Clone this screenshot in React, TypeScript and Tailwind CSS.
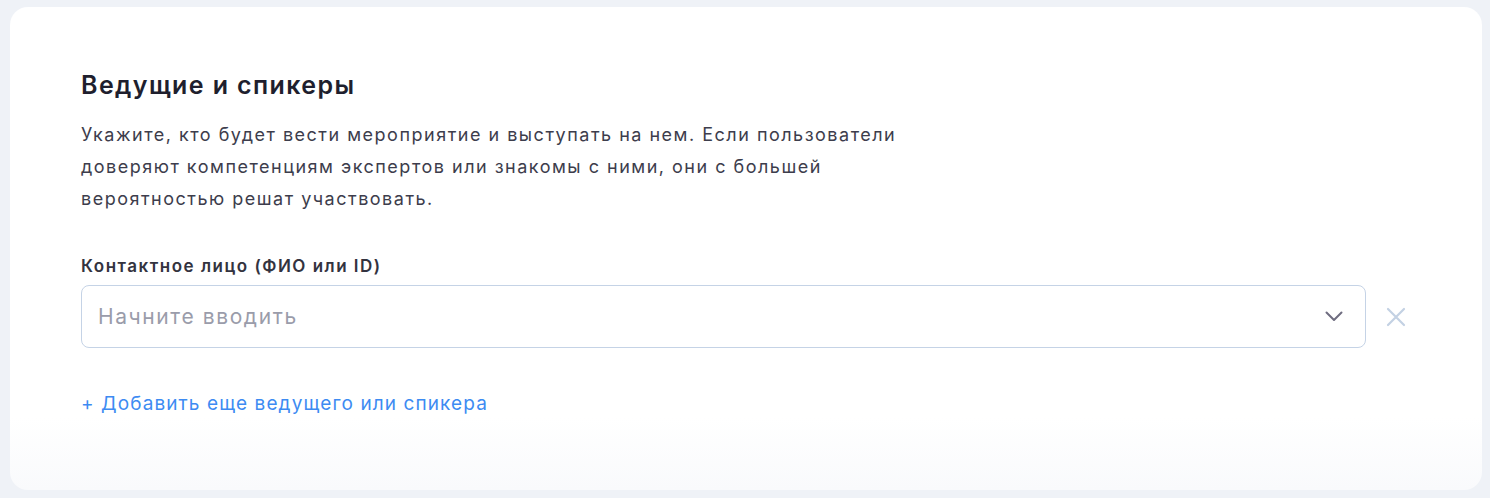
export default function App() {
  return (
    <div className="w-full min-h-[498px] bg-[#eff2f7] pt-[7px] pl-[10px] pr-[8px] pb-[8px] [font-family:Inter,'Noto_Sans',sans-serif]">
      <section className="rounded-[18px] bg-gradient-to-b from-white from-85% to-[#f9fafc] px-[71px] pt-[62px] pb-[62px] min-h-[483px]">
        <h2 className="text-[25px] leading-[32px] font-semibold text-[#1f1f2e] tracking-[1.4px]">
          Ведущие и спикеры
        </h2>
        <p className="mt-[18px] max-w-[840px] text-[18px] leading-[32px] text-[#3d3d4c] tracking-[1.5px]">
          Укажите, кто будет вести мероприятие и выступать на нем. Если пользователи
          доверяют компетенциям экспертов или знакомы с ними, они с большей
          вероятностью решат участвовать.
        </p>

        <label className="mt-[39px] block text-[17px] leading-[24px] font-semibold text-[#333340] tracking-[1.5px]">
          Контактное лицо (ФИО или ID)
        </label>
        <div className="mt-[7px] flex items-center gap-[20px] pr-[5px]">
          <div className="flex-1 h-[63px] flex items-center justify-between rounded-[8px] border border-[#c5d3e6] pl-[16px] pr-[22px]">
            <span className="text-[21px] text-[#9a9caa] tracking-[1.6px]">Начните вводить</span>
            <svg width="18" height="11" viewBox="0 0 18 11" fill="none">
              <path d="M1.5 1.5L9 9L16.5 1.5" stroke="#6f6d80" strokeWidth="2" strokeLinecap="round" strokeLinejoin="round" />
            </svg>
          </div>
          <svg width="20" height="20" viewBox="0 0 20 20" fill="none">
            <path d="M2 2L18 18M18 2L2 18" stroke="#c3d1e3" strokeWidth="2.2" strokeLinecap="round" />
          </svg>
        </div>

        <a className="mt-[42px] block text-[19px] leading-[28px] text-[#3d8bf2] tracking-[1.1px]" href="#">
          + Добавить еще ведущего или спикера
        </a>
      </section>
    </div>
  );
}
